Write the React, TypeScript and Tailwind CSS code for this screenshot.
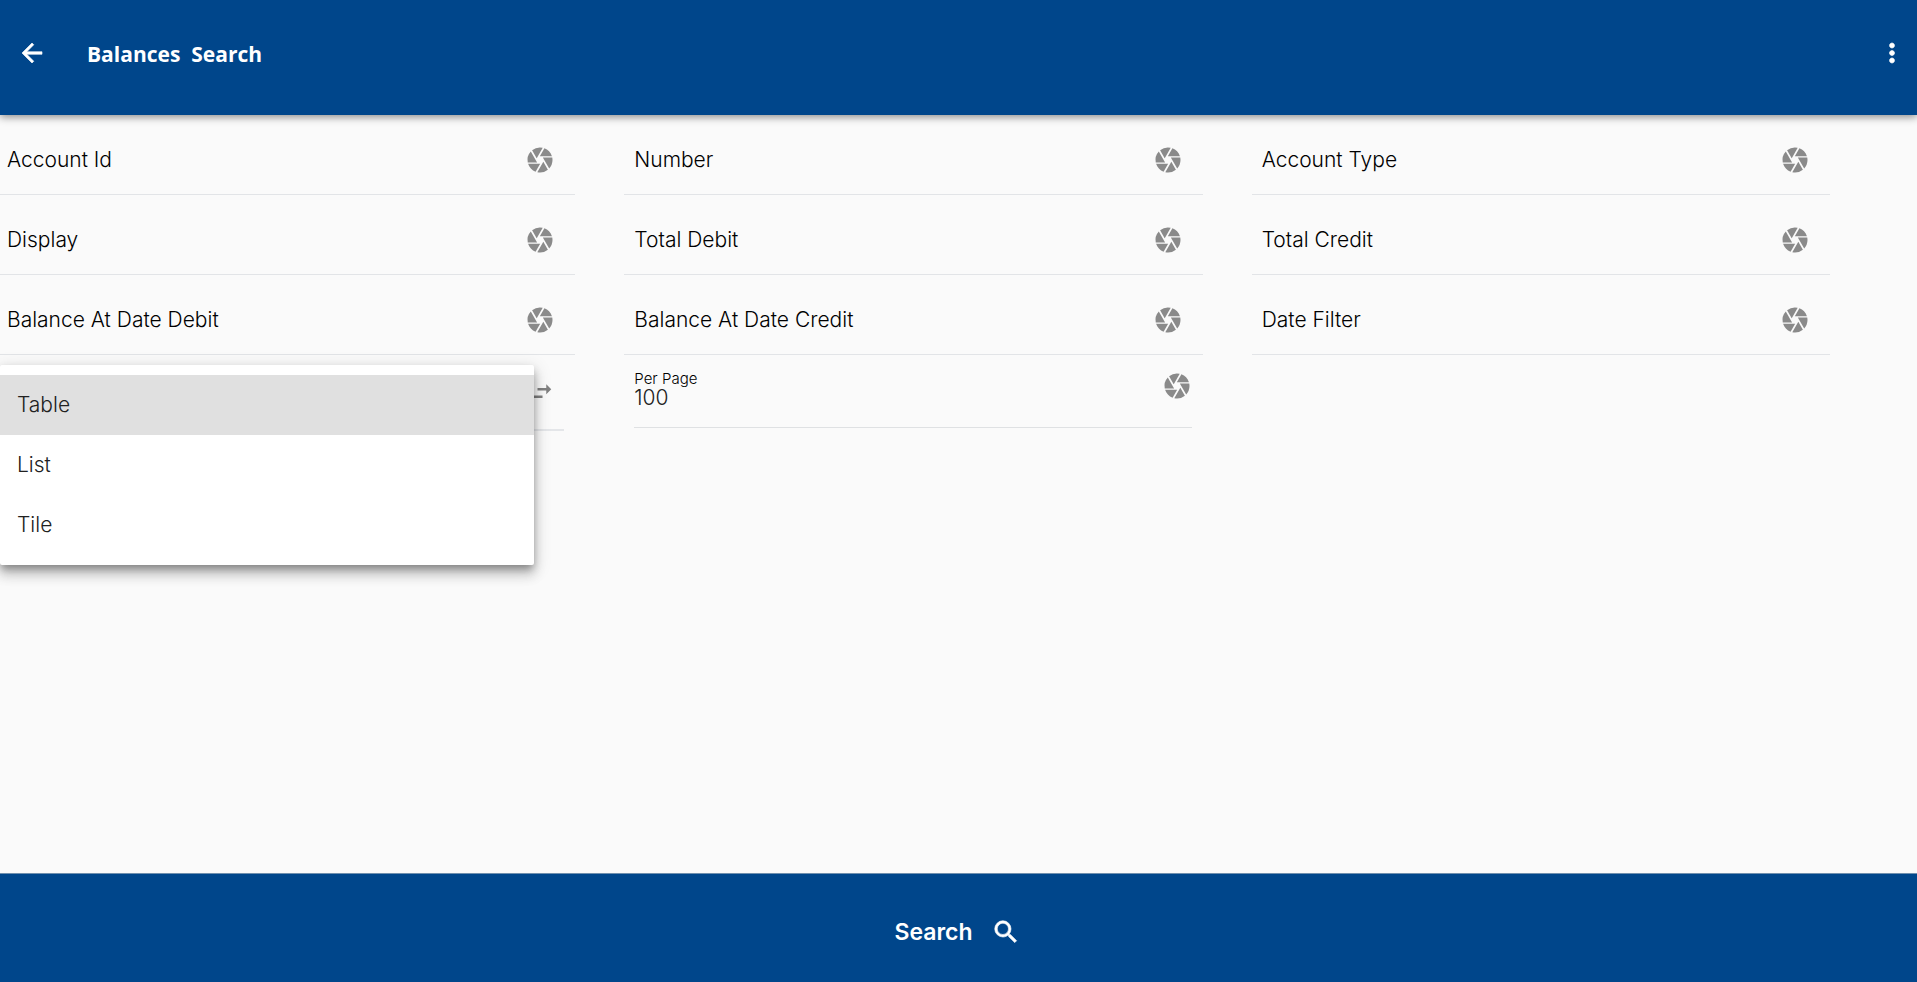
import { useState } from "react";
import { MdCamera, MdSwapHoriz } from "react-icons/md";

const fields = [
  { id: "account-id", label: "Account Id" },
  { id: "number", label: "Number" },
  { id: "account-type", label: "Account Type" },
  { id: "display", label: "Display" },
  { id: "total-debit", label: "Total Debit" },
  { id: "total-credit", label: "Total Credit" },
  { id: "balance-debit", label: "Balance At Date Debit" },
  { id: "balance-credit", label: "Balance At Date Credit" },
  { id: "date-filter", label: "Date Filter" },
];

const views = ["Table", "List", "Tile"];

const icons = {
  back: "M20 11H7.83l5.59-5.59L12 4l-8 8 8 8 1.41-1.41L7.83 13H20v-2z",
  more: "M12 8c1.1 0 2-.9 2-2s-.9-2-2-2-2 .9-2 2 .9 2 2 2zm0 2c-1.1 0-2 .9-2 2s.9 2 2 2 2-.9 2-2-.9-2-2-2zm0 6c-1.1 0-2 .9-2 2s.9 2 2 2 2-.9 2-2-.9-2-2-2z",
  search:
    "M15.5 14h-.79l-.28-.27A6.471 6.471 0 0 0 16 9.5 6.5 6.5 0 1 0 9.5 16c1.61 0 3.09-.59 4.23-1.57l.27.28v.79l5 4.99L20.49 19l-4.99-5zm-6 0C7.01 14 5 11.99 5 9.5S7.01 5 9.5 5 14 7.01 14 9.5 11.99 14 9.5 14z",
};

function BoldIcon({ name }: { name: keyof typeof icons }) {
  return (
    <svg viewBox="0 0 24 24" className="size-[30px]" fill="currentColor" stroke="currentColor" strokeWidth="0.5" aria-hidden="true">
      <path d={icons[name]} />
    </svg>
  );
}

function Field({ id, label }: { id: string; label: string }) {
  return (
    <div className="flex h-20 items-center border-b border-[#e2e4e7] pt-[10px] pr-5 pl-[10px]">
      <label htmlFor={id} className="shrink-0 text-[21px] leading-6 font-light">
        {label}
      </label>
      <input id={id} type="text" className="min-w-0 flex-1 bg-transparent px-2 text-[21px] font-light outline-none" />
      <button type="button" aria-label={`${label} options`} className="shrink-0 text-[#8a8a8a]">
        <MdCamera size={30} />
      </button>
    </div>
  );
}

function ViewPicker() {
  const [view, setView] = useState("Table");
  const [open, setOpen] = useState(true);
  return (
    <div className="relative pr-[11px] pl-[10px]">
      <div className="flex h-[76px] items-start justify-end border-b-2 border-[#e4e6e9] pt-[23px] pr-[9px]">
        <button type="button" aria-label="View" aria-haspopup="listbox" aria-expanded={open} onClick={() => setOpen(!open)} className="text-[#808080]">
          <MdSwapHoriz size={30} />
        </button>
      </div>
      {open && (
        <div
          role="listbox"
          aria-label="View"
          className="absolute top-[10px] right-[41px] left-[3px] z-10 rounded-xs bg-white py-[10px] shadow-[0_6px_7px_-3px_rgba(0,0,0,0.2),0_10px_12px_1px_rgba(0,0,0,0.14),0_4px_17px_2px_rgba(0,0,0,0.12),0_4px_8px_rgba(0,0,0,0.15)]"
        >
          {views.map((v) => (
            <button
              key={v}
              type="button"
              role="option"
              aria-selected={v === view}
              onClick={() => {
                setView(v);
                setOpen(false);
              }}
              className={
                v === view
                  ? "block h-[60px] w-full bg-[#e0e0e0] px-[17px] text-left text-[21px] font-light text-[#212121]"
                  : "block h-[60px] w-full px-[17px] text-left text-[21px] font-light text-[#212121]"
              }
            >
              {v}
            </button>
          ))}
        </div>
      )}
    </div>
  );
}

export default function App() {
  return (
    <div className="flex min-h-screen flex-col overflow-hidden bg-[#fafafa] font-[Inter,sans-serif] text-black">
      <header className="z-10 flex h-[115px] items-start bg-[#00468b] px-[10px] pt-[38px] text-white shadow-[0_2px_8px_rgba(0,0,0,0.45)]">
        <button type="button" aria-label="Back" className="ml-[7px]">
          <BoldIcon name="back" />
        </button>
        <h1 className="ml-10 flex-1 font-['Open_Sans',sans-serif] text-[21px] leading-8 font-bold whitespace-pre">Balances  Search</h1>
        <button type="button" aria-label="More">
          <BoldIcon name="more" />
        </button>
      </header>

      <main className="-ml-[3px] grid flex-1 auto-rows-min grid-cols-3 gap-x-[49px] pr-[87px]">
        {fields.map((f) => (
          <Field key={f.id} id={f.id} label={f.label} />
        ))}
        <ViewPicker />
        <div className="pr-[11px] pl-[10px]">
          <div className="flex h-[73px] items-start justify-between border-b border-[#dfe1e3] pt-4">
            <div className="flex flex-col">
              <label htmlFor="per-page" className="text-[15px] leading-4 font-light">
                Per Page
              </label>
              <input id="per-page" type="text" defaultValue="100" className="h-5 w-40 bg-transparent text-[21px] leading-5 font-light text-[#212121] outline-none" />
            </div>
            <button type="button" aria-label="Per Page options" className="text-[#8a8a8a]">
              <MdCamera size={30} />
            </button>
          </div>
        </div>
      </main>

      <footer className="flex h-[109px] border-t border-[#6f8fae] bg-[#00468b]">
        <button type="submit" className="flex w-full items-center justify-center gap-[18px] pt-2 pr-[2px] text-[23px] font-semibold text-white">
          Search
          <BoldIcon name="search" />
        </button>
      </footer>
    </div>
  );
}
